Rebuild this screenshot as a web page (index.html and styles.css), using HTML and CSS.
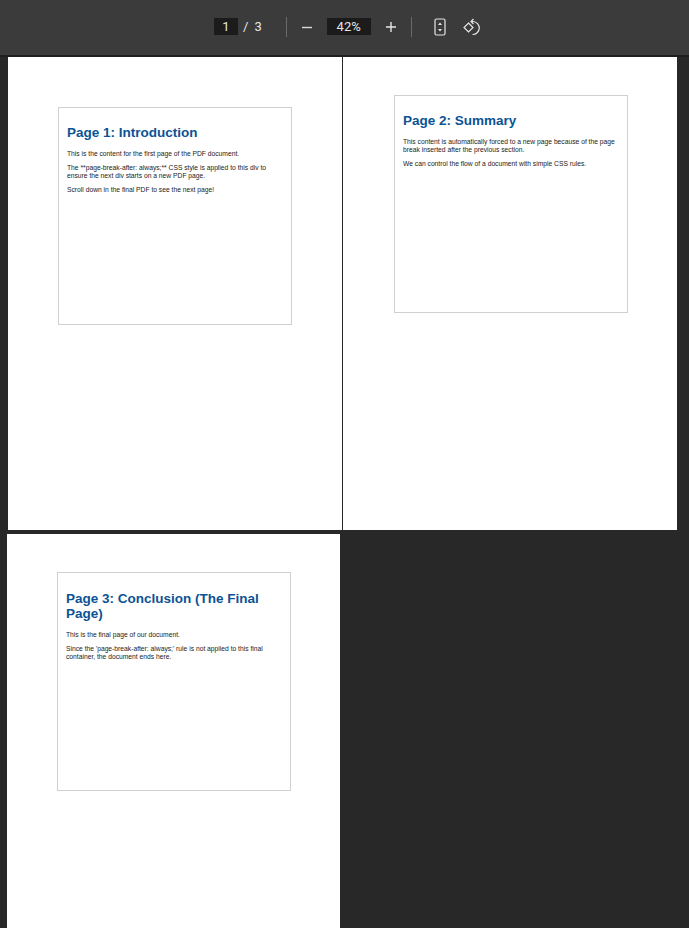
FILE: index.html
```html
<!DOCTYPE html>
<html>
  <head>
    <title>PDF Viewer</title>
    <link rel="stylesheet" href="styles.css">
  </head>
  <body>
    <div class="toolbar">
      <span class="page-input">1</span>
      <span class="page-slash">/</span>
      <span class="page-total">3</span>
      <span class="divider divider-left"></span>
      <svg class="zoom-out" width="12" height="12" viewBox="0 0 12 12">
        <path d="M1 6.5H11" stroke="#d8d8d8" stroke-width="1.4"/>
      </svg>
      <span class="zoom-input">42%</span>
      <svg class="zoom-in" width="12" height="12" viewBox="0 0 12 12">
        <path d="M1 6H11M6 1V11" stroke="#e6e6e6" stroke-width="1.4"/>
      </svg>
      <span class="divider divider-right"></span>
      <svg class="fit-icon" width="12" height="18" viewBox="0 0 12 18">
        <rect x="1" y="1" width="10" height="16" rx="1.5" fill="none" stroke="#e6e6e6" stroke-width="1.2"/>
        <path d="M6 4.5L8 7H4ZM6 13.5L8 11H4Z" fill="#e6e6e6"/>
      </svg>
      <svg class="rotate-icon" width="18" height="18" viewBox="0 0 18 18">
        <path d="M5.5 5L10 9.5L5.5 14L1 9.5Z" fill="none" stroke="#e6e6e6" stroke-width="1.2"/>
        <path d="M8.5 3.5H10A6.5 6.5 0 1 1 9.5 16.5" fill="none" stroke="#e6e6e6" stroke-width="1.2"/>
        <path d="M10.5 1L8 3.5L10.5 6" fill="none" stroke="#e6e6e6" stroke-width="1.2"/>
      </svg>
    </div>

    <div class="viewer">
      <div class="page-row">
        <div class="page page-one">
          <div class="sheet">
            <h1>Page 1: Introduction</h1>
            <p>This is the content for the first page of the PDF document.</p>
            <p>The **page-break-after: always;** CSS style is applied to this div to ensure the next div starts on a new PDF page.</p>
            <p>Scroll down in the final PDF to see the next page!</p>
          </div>
        </div>
        <div class="page page-two">
          <div class="sheet">
            <h1>Page 2: Summary</h1>
            <p>This content is automatically forced to a new page because of the page break inserted after the previous section.</p>
            <p>We can control the flow of a document with simple CSS rules.</p>
          </div>
        </div>
      </div>
      <div class="page page-three">
        <div class="sheet">
          <h1>Page 3: Conclusion (The Final Page)</h1>
          <p>This is the final page of our document.</p>
          <p>Since the 'page-break-after: always;' rule is not applied to this final container, the document ends here.</p>
        </div>
      </div>
    </div>
  </body>
</html>
```

FILE: styles.css
```css
html, body {
  height: 928px;
  overflow: hidden;
}

body {
  margin: 0;
  background-color: #282828;
  font-family: "Liberation Sans", Arial, sans-serif;
}

.toolbar {
  display: flex;
  align-items: center;
  box-sizing: border-box;
  height: 57px;
  padding-left: 214px;
  padding-bottom: 2px;
  background-color: #3b3b3b;
  border-bottom: 2px solid #1e1e1e;
  color: #e6e6e6;
  font-family: Roboto, "Liberation Sans", sans-serif;
  font-size: 13px;
}

.page-input {
  width: 24px;
  height: 17px;
  line-height: 17px;
  text-align: center;
  background-color: #1b1b1b;
}

.page-slash {
  margin-left: 5px;
}

.page-total {
  margin-left: 6px;
}

.divider {
  width: 1px;
  height: 20px;
  background-color: #6a6a6a;
}

.divider-left {
  margin-left: 24px;
}

.zoom-out {
  margin-left: 14px;
}

.zoom-input {
  width: 44px;
  height: 17px;
  margin-left: 14px;
  line-height: 17px;
  text-align: center;
  background-color: #1b1b1b;
}

.zoom-in {
  margin-left: 14px;
}

.divider-right {
  margin-left: 14px;
}

.fit-icon {
  margin-left: 22px;
}

.rotate-icon {
  margin-left: 17px;
}

.page-row {
  display: flex;
  gap: 1px;
  padding-left: 8px;
}

.page {
  background-color: #ffffff;
  width: 334px;
  height: 473px;
  overflow: hidden;
}

.page-one {
  padding-top: 50px;
  height: 423px;
}

.page-two {
  padding-top: 38px;
  height: 435px;
}

.page-three {
  width: 333px;
  height: 400px;
  margin-top: 4px;
  margin-left: 7px;
  padding-top: 38px;
}

.sheet {
  box-sizing: border-box;
  width: 234px;
  height: 218px;
  margin-left: 50px;
  padding: 17px 8px;
  background-color: #ffffff;
  border: 1px solid #d0d0d0;
}

.page-two .sheet {
  margin-left: 51px;
}

.page-three .sheet {
  height: 219px;
  padding-top: 18px;
}

h1 {
  margin: 0 0 9.5px;
  color: #0b5394;
  font-size: 13.5px;
  font-weight: bold;
  line-height: 15.4px;
}

p {
  margin: 0 0 6.3px;
  color: #111111;
  font-size: 6.72px;
  line-height: 7.7px;
  opacity: 0.95;
}
```
